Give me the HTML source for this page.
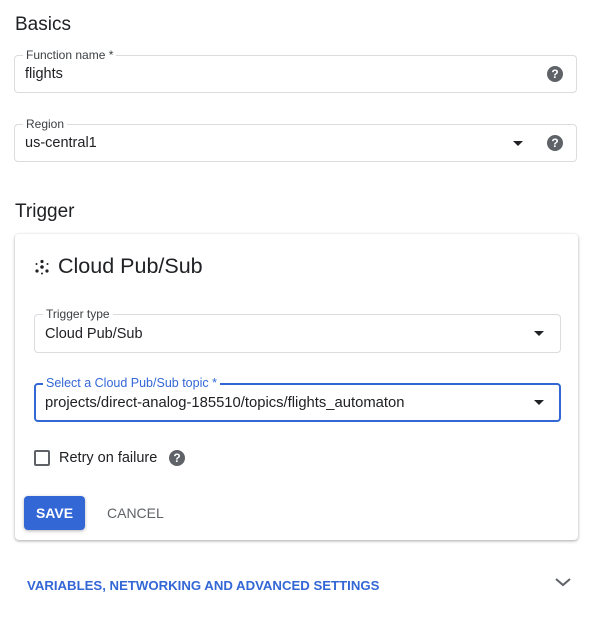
<!DOCTYPE html>
<html><head><style>
*{box-sizing:border-box;margin:0;padding:0}
body{width:600px;height:644px;background:#fff;font-family:"Liberation Sans",Arial,sans-serif;color:#202124;position:relative;overflow:hidden}
.abs{position:absolute}
h2{position:absolute;font-weight:400;font-size:19px;color:#202124}
.field{position:absolute;border:1px solid #dadce0;border-radius:4px}
.lbl{position:absolute;top:-8px;left:8px;background:#fff;padding:0 3px;font-size:12px;color:#3c4043;line-height:14px}
.val{position:absolute;left:10px;font-size:14.5px;color:#202124}
.help{position:absolute;width:16px;height:16px;border-radius:50%;background:#5f6368;color:#fff;font-size:12px;font-weight:bold;text-align:center;line-height:16px}
.arrow{position:absolute;width:0;height:0;border-left:5px solid transparent;border-right:5px solid transparent;border-top:5px solid #202124}
</style></head><body>
<h2 style="left:15px;top:14px">Basics</h2>
<div class="field" style="left:14px;top:55px;width:563px;height:38px">
 <div class="lbl">Function name *</div>
 <div class="val" style="top:10px">flights</div>
 <div class="help" style="left:532px;top:10px">?</div>
</div>
<div class="field" style="left:14px;top:124px;width:563px;height:38px">
 <div class="lbl">Region</div>
 <div class="val" style="top:10px">us-central1</div>
 <div class="arrow" style="left:498px;top:16px"></div>
 <div class="help" style="left:532px;top:10px">?</div>
</div>
<h2 style="left:15px;top:201px">Trigger</h2>
<div class="abs" style="left:15px;top:234px;width:563px;height:306px;border-radius:4px;box-shadow:0 1px 2px rgba(60,64,67,.3),0 1px 3px 1px rgba(60,64,67,.12)">
 <svg class="abs" style="left:19px;top:25px" width="16" height="16" viewBox="0 0 16 16"><g fill="#202124"><circle cx="8" cy="8" r="1.8"/><circle cx="8" cy="2.5" r="1.6"/><circle cx="3" cy="12" r="1.6"/><circle cx="13" cy="12" r="1.6"/><circle cx="2.5" cy="5" r="1"/><circle cx="13.5" cy="5" r="1"/><circle cx="8" cy="14.5" r="1"/></g></svg>
 <div class="abs" style="left:43px;top:20px;font-size:21.5px">Cloud Pub/Sub</div>
 <div class="field" style="left:19px;top:80px;width:527px;height:39px">
  <div class="lbl">Trigger type</div>
  <div class="val" style="top:11px">Cloud Pub/Sub</div>
  <div class="arrow" style="left:499px;top:16px"></div>
 </div>
 <div class="field" style="left:19px;top:149px;width:527px;height:39px;border:2px solid #3367d6">
  <div class="lbl" style="color:#3367d6;top:-9px;left:7px;font-size:12.5px">Select a Cloud Pub/Sub topic *</div>
  <div class="val" style="top:10px;left:9px;font-size:14.8px">projects/direct-analog-185510/topics/flights_automaton</div>
  <div class="arrow" style="left:498px;top:15px"></div>
 </div>
 <div class="abs" style="left:19px;top:216px;width:16px;height:16px;border:2px solid #5f6368;border-radius:2px"></div>
 <div class="abs" style="left:44px;top:216px;font-size:14.5px">Retry on failure</div>
 <div class="help" style="left:154px;top:216px">?</div>
 <div class="abs" style="left:9px;top:262px;width:61px;height:34px;background:#3367d6;border-radius:4px;box-shadow:0 1px 3px rgba(0,0,0,.3);color:#fff;font-weight:bold;font-size:14px;text-align:center;line-height:34px">SAVE</div>
 <div class="abs" style="left:92px;top:271px;font-size:14px;color:#5f6368">CANCEL</div>
</div>
<div class="abs" style="left:27px;top:578px;font-size:13.2px;font-weight:bold;color:#3367d6;letter-spacing:0">VARIABLES, NETWORKING AND ADVANCED SETTINGS</div>
<svg class="abs" style="left:554px;top:576px" width="18" height="12" viewBox="0 0 18 12"><path d="M2 3 L9 9 L16 3" fill="none" stroke="#5f6368" stroke-width="2"/></svg>
</body></html>
